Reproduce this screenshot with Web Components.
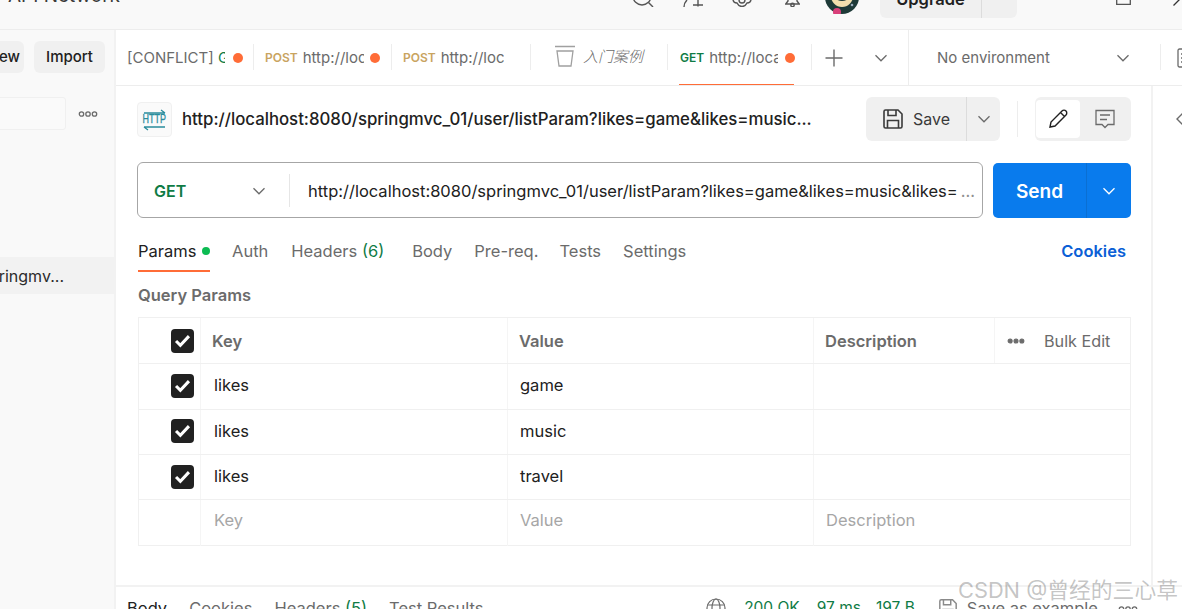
<!DOCTYPE html>
<html>
<head>
<meta charset="utf-8">
<title>Postman</title>
<style>
  html, body { margin: 0; height: 609px; overflow: hidden; background: #fff; }
  body { font-family: Inter, "Noto Sans CJK SC", sans-serif; font-size: 16px; color: #212121; }
  pm-app { width: 1182px; height: 609px; }
</style>
</head>
<body>
<pm-app></pm-app>
<script>
const chevron = (size, color) => `<svg width="${size}" height="${size}" viewBox="0 0 16 16" fill="none" stroke="${color || '#6b6b6b'}" stroke-width="1.3"><path d="M2.5 5.2 8 10.8l5.5-5.6"/></svg>`;
const dots = (color, fill) => `<svg width="20" height="8" viewBox="0 0 20 8" fill="${fill || 'none'}" stroke="${color || '#6b6b6b'}" stroke-width="1.3"><circle cx="3.5" cy="4" r="2.2"/><circle cx="10" cy="4" r="2.2"/><circle cx="16.5" cy="4" r="2.2"/></svg>`;
const saveIcon = (size, color) => `<svg width="${size}" height="${size}" viewBox="0 0 22 22" fill="none" stroke="${color}" stroke-width="1.6"><path d="M2 3.5A1.5 1.5 0 0 1 3.500 2H16l4 4v12.500a1.500 1.500 0 0 1-1.500 1.500h-15A1.500 1.500 0 0 1 2 18.500z"/><path d="M6 2v5.500h8V2M5.500 20v-7.500h11V20"/></svg>`;

class PmTopbar extends HTMLElement {
  connectedCallback() {
    this.attachShadow({ mode: "open" }).innerHTML = `
      <style>
        :host { display: flex; height: 29px; background: #f9f9f9; border-bottom: 1px solid #ededed; overflow: hidden; align-items: flex-end; }
        .name { margin: 0 0 23px 8px; font-size: 19px; line-height: 20px; color: #3a3a3a; white-space: nowrap; flex: none; }
        .tools { margin-left: auto; display: flex; align-items: flex-end; flex: none; }
        .tools svg { display: block; flex: none; }
        .upgrade { width: 137px; height: 38px; margin-left: 21px; margin-bottom: 11px; display: grid; grid-template-columns: 101px 1fr; background: #f0f0f0; border-radius: 6px; font-weight: 600; font-size: 16.500px; color: #212121; }
        .upgrade span { display: flex; justify-content: center; padding-top: 9px; }
        .upgrade i { border-left: 1px solid #dcdcdc; }
      </style>
      <div class="name">API Network</div>
      <div class="tools">
        <svg style="margin-bottom:22px" width="24" height="20" viewBox="0 0 24 20" fill="none" stroke="#555" stroke-width="1.4"><circle cx="10" cy="9" r="9"/><path d="m16.500 15.500 4.500 4.500"/></svg>
        <svg style="margin:0 0 22px 27px" width="20" height="20" viewBox="0 0 20 20" fill="none" stroke="#555" stroke-width="1.4"><path d="M1 20c0-3 1-5 3-7M15 8v11.500M10 18h10"/></svg>
        <svg style="margin:0 0 22px 29px" width="20" height="20" viewBox="0 0 20 20" fill="none" stroke="#555" stroke-width="1.4"><path d="M1 12c0 3 2 4 4 4 1 2 2 3.500 5 3.500s4-1.500 5-3.500c2 0 4-1 4-4"/><circle cx="10" cy="13" r="3"/></svg>
        <svg style="margin:0 0 22px 33px" width="15" height="20" viewBox="0 0 15 20" fill="none" stroke="#555" stroke-width="1.4"><path d="M3 8v6l-2.300 3h13.600L12 14V8"/><circle cx="7.500" cy="18" r="1.700"/></svg>
        <svg style="margin:0 0 15px 25px" width="34" height="34" viewBox="0 0 34 34"><circle cx="17" cy="17" r="17" fill="#1e3a38"/><circle cx="17" cy="16" r="11" fill="#f2dfae"/><circle cx="17" cy="11" r="10" fill="#1e3a38"/><circle cx="12" cy="32" r="4" fill="#d9407a"/><circle cx="27" cy="25" r="1.300" fill="#9ab"/></svg>
        <div class="upgrade"><span>Upgrade</span><i></i></div>
        <svg style="margin:0 0 24px 99px" width="15" height="20" viewBox="0 0 15 20" fill="none" stroke="#555" stroke-width="1.300"><path d="M.7 0v19.300h13.600V0"/></svg>
        <svg style="margin:0 0 23px 42px" width="9" height="8" viewBox="0 0 9 8" fill="none" stroke="#333" stroke-width="1.300"><path d="M.5 7.500 8 0"/></svg>
      </div>`;
  }
}
customElements.define("pm-topbar", PmTopbar);

class PmSidebar extends HTMLElement {
  connectedCallback() {
    this.attachShadow({ mode: "open" }).innerHTML = `
      <style>
        :host { display: block; background: #f9f9f9; border-right: 2px solid #f2f2f2; overflow: hidden; box-sizing: border-box; height: 100%; }
        .actions { display: flex; justify-content: flex-end; gap: 10px; padding: 11px 9px 0 0; height: 32px; }
        .btn { flex: none; background: #f0f0f0; border-radius: 6px; height: 32px; line-height: 32px; font-size: 15px; font-weight: 500; color: #212121; text-align: center; }
        .btn.new { width: 60px; display: flex; justify-content: flex-end; padding-right: 4px; box-sizing: border-box; }
        .btn.imp { width: 71px; }
        .find { display: flex; justify-content: flex-end; align-items: center; gap: 12px; padding: 24px 16px 0 0; }
        .input { width: 120px; height: 31px; flex: none; background: #fafafa; border: 1px solid #f0f0f0; border-radius: 3px; }
        .find svg { flex: none; }
        .item { margin-top: 127px; height: 37px; background: #f2f2f2; display: flex; justify-content: flex-end; align-items: center; padding-right: 50px; font-size: 16px; color: #2b2b2b; white-space: nowrap; }
      </style>
      <div class="actions"><div class="btn new">New</div><div class="btn imp">Import</div></div>
      <div class="find"><div class="input"></div>${dots()}</div>
      <div class="item">springmv...</div>`;
  }
}
customElements.define("pm-sidebar", PmSidebar);

class PmTab extends HTMLElement {
  connectedCallback() {
    const method = this.getAttribute("method");
    const kind = method === "GET" ? "#0f7b45" : "#c9a45f";
    const w = this.getAttribute("clip");
    const dotRight = this.getAttribute("dot");
    const active = this.hasAttribute("active");
    this.attachShadow({ mode: "open" }).innerHTML = `
      <style>
        :host { display: flex; flex: none; height: 55px; align-items: center; box-sizing: border-box; position: relative; font-size: 15px; color: #6b6b6b; white-space: nowrap; }
        :host::after { content: ""; position: absolute; right: 0; top: 14px; height: 26px; width: 1px; background: #ededed; }
        .method { font-size: 12px; font-weight: 600; color: ${kind}; margin-right: 5px; flex: none; }
        .clip { overflow: hidden; width: ${w}px; flex: none; display: block; }
        .dot { width: 10px; height: 10px; border-radius: 50%; background: #ff6c37; margin-left: auto; margin-right: ${dotRight}px; flex: none; }
        .bar { position: absolute; left: 11px; right: 18px; bottom: -1px; height: 2px; background: #ff6c37; display: ${active ? "block" : "none"}; }
      </style>
      ${method ? `<span class="method">${method}</span>` : ""}
      <span class="clip"><slot></slot></span>
      ${dotRight !== null ? `<span class="dot"></span>` : ""}
      <span class="bar"></span>`;
  }
}
customElements.define("pm-tab", PmTab);

class PmTabstrip extends HTMLElement {
  connectedCallback() {
    this.attachShadow({ mode: "open" }).innerHTML = `
      <style>
        :host { display: flex; height: 55px; border-bottom: 1px solid #ededed; background: #fff; overflow: hidden; }
        ::slotted(pm-tab) { padding: 0 10px 0 11px; }
        .add { width: 97px; flex: none; display: flex; align-items: center; border-right: 1px solid #ededed; box-sizing: border-box; padding-left: 12px; gap: 29px; }
        .env { width: 252px; flex: none; display: flex; align-items: center; box-sizing: border-box; padding: 0 30px 0 28px; font-size: 15px; color: #6b6b6b; position: relative; }
        .env span { flex: 1; }
        .env::after { content: ""; position: absolute; right: 0; top: 14px; height: 26px; width: 1px; background: #ededed; }
        .doc { margin: 18px 0 0 16px; flex: none; }
      </style>
      <slot></slot>
      <div class="add">
        <svg width="20" height="20" viewBox="0 0 20 20" stroke="#6b6b6b" stroke-width="1.400"><path d="M10 1.500v17M1.500 10h17"/></svg>
        ${chevron(16)}
      </div>
      <div class="env"><span>No environment</span>${chevron(16)}</div>
      <svg class="doc" width="20" height="20" viewBox="0 0 20 20" fill="none" stroke="#6b6b6b" stroke-width="1.300"><rect x="1" y="1" width="16" height="18" rx="1.500"/><path d="M4 6h10M4 10h10M4 14h10"/></svg>`;
  }
}
customElements.define("pm-tabstrip", PmTabstrip);

class PmRequestHead extends HTMLElement {
  connectedCallback() {
    this.attachShadow({ mode: "open" }).innerHTML = `
      <style>
        :host { display: flex; align-items: center; height: 44px; }
        .badge { width: 33px; height: 33px; border: 1px solid #f0f0f0; border-radius: 4px; background: #fafafa; display: flex; align-items: center; justify-content: center; flex: none; margin-left: -1px; position: relative; }
        .badge b { font-family: "Liberation Sans", sans-serif; font-size: 12.500px; font-weight: 400; color: #2a8c9c; line-height: 10px; display: block; transform: scaleX(.72); -webkit-text-stroke: .3px #2a8c9c; }
        .badge svg { position: absolute; left: 5px; top: 6px; }
        .title { width: 630px; margin-left: 10px; flex: none; font-size: 16.800px; font-weight: 500; color: #212121; white-space: nowrap; overflow: hidden; }
        .save { margin-left: 54px; width: 134px; height: 44px; flex: none; background: #f0f0f0; border-radius: 6px; display: grid; grid-template-columns: 100px 1fr; color: #3a3a3a; font-size: 16px; }
        .save div { display: flex; align-items: center; justify-content: center; gap: 9px; }
        .save div + div { border-left: 1px solid #dcdcdc; }
        .sep { width: 1px; height: 36px; background: #ededed; margin: 0 17px; flex: none; }
        .toggle { width: 96px; height: 44px; flex: none; background: #f0f0f0; border-radius: 6px; display: grid; grid-template-columns: 44px 1fr; align-items: center; box-sizing: border-box; padding: 3px 1px 3px 1px; }
        .toggle div { display: flex; height: 38px; align-items: center; justify-content: center; border-radius: 4px; }
        .toggle .on { background: #fff; }
      </style>
      <div class="badge">
        <svg width="24" height="22" viewBox="0 0 24 22" fill="none" stroke="#2a8c9c" stroke-width="1.300"><path d="M1 4h21M18 1l4 3M1 18h21M1 18l4 3"/></svg>
        <b>HTTP</b>
      </div>
      <div class="title">http://localhost:8080/springmvc_01/user/listParam?likes=game&amp;likes=music...</div>
      <div class="save">
        <div>${saveIcon(22, "#3a3a3a")}<span>Save</span></div>
        <div>${chevron(16)}</div>
      </div>
      <div class="sep"></div>
      <div class="toggle">
        <div class="on"><svg width="22" height="22" viewBox="0 0 22 22" fill="none" stroke="#212121" stroke-width="1.400"><path d="m3 19 1-5L15 3c1-1 3-1 4 0s1 3 0 4L8 18zM13.500 4.500l4 4"/></svg></div>
        <div><svg width="22" height="22" viewBox="0 0 22 22" fill="none" stroke="#6b6b6b" stroke-width="1.300"><path d="M2 2.500h18v14h-6l-3 3-3-3H2zM6 7h10M6 11.500h7"/></svg></div>
      </div>`;
  }
}
customElements.define("pm-request-head", PmRequestHead);

class PmUrlbar extends HTMLElement {
  connectedCallback() {
    this.attachShadow({ mode: "open" }).innerHTML = `
      <style>
        :host { display: flex; height: 56px; gap: 10px; }
        .box { width: 846px; flex: none; box-sizing: border-box; height: 56px; border: 1px solid #a6a6a6; border-radius: 6px; display: flex; align-items: center; margin-left: -1px; padding-top: 1px; }
        .method { width: 152px; flex: none; height: 33px; border-right: 1px solid #e6e6e6; display: flex; align-items: center; box-sizing: border-box; padding: 0 22px 0 16px; color: #0f7b45; font-weight: 600; font-size: 16px; justify-content: space-between; }
        .url { margin-left: 18px; min-width: 0; flex: 1; font-size: 16.500px; color: #212121; white-space: nowrap; overflow: hidden; }
        .more { color: #8f8f8f; margin-left: 3px; }
        .send { width: 138px; height: 55px; flex: none; margin-top: 1px; background: #097bed; border-radius: 5px; color: #fff; display: grid; grid-template-columns: 93px 1fr; }
        .send div { display: flex; align-items: center; justify-content: center; font-size: 19px; font-weight: 600; padding-top: 1px; }
        .send div + div { border-left: 1px solid #0a6fd3; }
      </style>
      <div class="box">
        <div class="method"><span>GET</span>${chevron(16)}</div>
        <div class="url">http://localhost:8080/springmvc_01/user/listParam?likes=game&amp;likes=music&amp;likes=<span class="more">...</span></div>
      </div>
      <div class="send"><div>Send</div><div>${chevron(16, "#fff")}</div></div>`;
  }
}
customElements.define("pm-urlbar", PmUrlbar);

class PmOptionTabs extends HTMLElement {
  connectedCallback() {
    this.attachShadow({ mode: "open" }).innerHTML = `
      <style>
        :host { display: flex; width: 993px; height: 34px; margin-top: 20px; font-size: 16.500px; color: #6b6b6b; align-items: flex-start; white-space: nowrap; }
        span { display: block; line-height: 26px; margin-right: 22px; flex: none; }
        .on { color: #212121; width: 72px; box-sizing: border-box; height: 34px; border-bottom: 2px solid #ff6c37; display: flex; align-items: flex-start; }
        .on i { width: 8px; height: 8px; background: #0cbb52; border-radius: 50%; margin: 9px 0 0 6px; flex: none; }
        .num { display: inline; color: #0f7b45; margin: 0; }
        .cookies { margin: 0 5px 0 auto; color: #0b5fd6; font-weight: 600; }
      </style>
      <span class="on">Params<i></i></span>
      <span style="margin-right:23px">Auth</span>
      <span style="margin-right:28px">Headers <span class="num">(6)</span></span>
      <span>Body</span>
      <span style="margin-right:21px">Pre-req.</span>
      <span style="margin-right:22px">Tests</span>
      <span>Settings</span>
      <span class="cookies">Cookies</span>`;
  }
}
customElements.define("pm-option-tabs", PmOptionTabs);

class PmCheck extends HTMLElement {
  connectedCallback() {
    this.attachShadow({ mode: "open" }).innerHTML = `
      <style>
        :host { display: flex; width: 23px; height: 24px; border-radius: 4px; background: #212121; align-items: center; justify-content: center; }
      </style>
      <svg width="17" height="14" viewBox="0 0 15 13" fill="none" stroke="#fff" stroke-width="2.800"><path d="M1.500 6.500 5.500 10.500 13.500 2"/></svg>`;
  }
}
customElements.define("pm-check", PmCheck);

class PmParamRow extends HTMLElement {
  connectedCallback() {
    const head = this.hasAttribute("head");
    const blank = this.hasAttribute("blank");
    const h = this.getAttribute("h") || 45;
    const lift = this.getAttribute("lift") || 0;
    const boxLift = this.getAttribute("boxlift") || 0;
    const cell = n => this.getAttribute(n) || "";
    this.attachShadow({ mode: "open" }).innerHTML = `
      <style>
        :host { display: grid; grid-template-columns: 61px 307px 306px 181px 1fr; height: ${h}px; border-bottom: 1px solid #f0f0f0; box-sizing: border-box; font-size: 16.500px; color: ${blank ? "#a6a6a6" : "#212121"}; ${head ? "font-weight: 600;" : ""} }
        :host(:last-child) { border-bottom: 0; }
        div { display: flex; align-items: center; box-sizing: border-box; padding-left: ${head ? 11 : 12}px; padding-bottom: ${lift}px; border-left: 1px solid #f5f5f5; ${head ? "color: #6b6b6b;" : ""} white-space: nowrap; }
        .box { border-left: 0; padding-left: 32px; padding-bottom: ${boxLift}px; }
        .key { padding-left: ${head ? 11 : 13}px; }
        .wide { grid-column: 4 / 6; }
        .bulk { font-weight: 400; font-size: 16.200px; padding-left: 12px; gap: 19px; }
        .bulk svg { flex: none; }
      </style>
      <div class="box">${blank ? "" : "<pm-check></pm-check>"}</div>
      <div class="key">${cell("key")}</div>
      <div>${cell("value")}</div>
      ${head
        ? `<div>${cell("desc")}</div><div class="bulk">${dots("#6b6b6b", "#6b6b6b").replace('width="20"', 'width="18"')}<span>Bulk Edit</span></div>`
        : `<div class="wide">${cell("desc")}</div>`}`;
  }
}
customElements.define("pm-param-row", PmParamRow);

class PmParams extends HTMLElement {
  connectedCallback() {
    this.attachShadow({ mode: "open" }).innerHTML = `
      <style>
        :host { display: block; }
        h4 { margin: 0; font-size: 16.500px; font-weight: 600; color: #6b6b6b; line-height: 19px; padding: 14px 0 12px; }
        .table { width: 993px; height: 229px; border: 1px solid #f0f0f0; box-sizing: border-box; }
      </style>
      <h4>Query Params</h4>
      <div class="table"><slot></slot></div>`;
  }
}
customElements.define("pm-params", PmParams);

class PmResponseBar extends HTMLElement {
  connectedCallback() {
    this.attachShadow({ mode: "open" }).innerHTML = `
      <style>
        :host { display: flex; height: 40px; border-top: 2px solid #f2f2f2; font-size: 16.500px; color: #6b6b6b; padding: 11px 0 0 11px; box-sizing: border-box; align-items: flex-start; white-space: nowrap; overflow: hidden; }
        span { display: block; line-height: 20px; flex: none; }
        .g { color: #0f7b45; font-size: 15.500px; }
        svg { flex: none; display: block; }
      </style>
      <span style="color:#212121;margin-right:22px">Body</span>
      <span style="margin-right:22px">Cookies</span>
      <span style="margin-right:22px">Headers <span class="g" style="display:inline;font-size:inherit">(5)</span></span>
      <span>Test Results</span>
      <svg style="margin:0 0 0 auto" width="20" height="20" viewBox="0 0 20 20" fill="none" stroke="#6b6b6b" stroke-width="1.200"><circle cx="10" cy="10" r="9"/><ellipse cx="10" cy="10" rx="4" ry="9"/><path d="M1.500 7h17M1.500 13h17"/></svg>
      <span class="g" style="margin-left:18px">200 OK</span>
      <span class="g" style="margin-left:17px">97 ms</span>
      <span class="g" style="margin-left:15px">197 B</span>
      <span style="margin-left:23px;height:20px">${saveIcon(20, "#8a8a8a")}</span>
      <span style="margin-left:9px">Save as example</span>
      <span style="margin:7px 44px 0 20px">${dots("#6b6b6b")}</span>`;
  }
}
customElements.define("pm-response-bar", PmResponseBar);

class PmApp extends HTMLElement {
  connectedCallback() {
    this.attachShadow({ mode: "open" }).innerHTML = `
      <style>
        :host { display: grid; grid-template-rows: 30px 1fr; height: 609px; overflow: hidden; position: relative; }
        .body { display: grid; grid-template-columns: 116px 1fr; min-height: 0; overflow: hidden; }
        .main { min-width: 0; display: flex; flex-direction: column; }
        .split { display: grid; grid-template-columns: 1037px 1fr; height: 499px; flex: none; }
        .pane { padding: 11px 0 0 22px; border-right: 2px solid #f2f2f2; box-sizing: border-box; }
        .pane pm-urlbar { margin-top: 21px; }
        .rail { padding: 25px 0 0 22px; box-sizing: border-box; }
        .mark { position: absolute; right: 4px; bottom: 7px; font-size: 21.800px; line-height: 24px; color: rgba(90,90,90,.36); white-space: nowrap; }
      </style>
      <pm-topbar></pm-topbar>
      <div class="body">
        <pm-sidebar></pm-sidebar>
        <div class="main">
          <pm-tabstrip>
            <pm-tab clip="98" dot="1" style="width:138px">[CONFLICT] <span style="color:#0f7b45">GET</span></pm-tab>
            <pm-tab method="POST" clip="61" dot="2" style="width:138px">http://localhost</pm-tab>
            <pm-tab method="POST" clip="63" style="width:139px">http://localhost</pm-tab>
            <pm-tab clip="110" style="width:137px"><span style="display:inline-flex;align-items:center;gap:8px;padding-left:13px"><svg width="20" height="22" viewBox="0 0 20 22" fill="none" stroke="#a0a0a0" stroke-width="1.300"><path d="M0 1.500h20M2 6h16l-2 15H4z"/></svg><span style="font-size:15px;font-family:'Noto Sans CJK SC',sans-serif;font-weight:300;font-style:italic">入门案例</span></span></pm-tab>
            <pm-tab method="GET" clip="69" dot="7" active style="width:144px;padding-left:12px">http://localhost</pm-tab>
          </pm-tabstrip>
          <div class="split">
            <div class="pane">
              <pm-request-head></pm-request-head>
              <pm-urlbar></pm-urlbar>
              <pm-option-tabs></pm-option-tabs>
              <pm-params>
                <pm-param-row head h="46" key="Key" value="Value" desc="Description"></pm-param-row>
                <pm-param-row h="46" lift="4" boxlift="2" key="likes" value="game"></pm-param-row>
                <pm-param-row h="45" lift="2" boxlift="2" key="likes" value="music"></pm-param-row>
                <pm-param-row h="45" lift="2" key="likes" value="travel"></pm-param-row>
                <pm-param-row blank h="46" lift="7" key="Key" value="Value" desc="Description"></pm-param-row>
              </pm-params>
            </div>
            <div class="rail">
              <svg width="10" height="16" viewBox="0 0 10 16" fill="none" stroke="#6b6b6b" stroke-width="1.400"><path d="M8 2 2 8l6 6"/></svg>
            </div>
          </div>
          <pm-response-bar></pm-response-bar>
        </div>
      </div>
      <div class="mark">CSDN @曾经的三心草</div>`;
  }
}
customElements.define("pm-app", PmApp);
</script>
</body>
</html>
